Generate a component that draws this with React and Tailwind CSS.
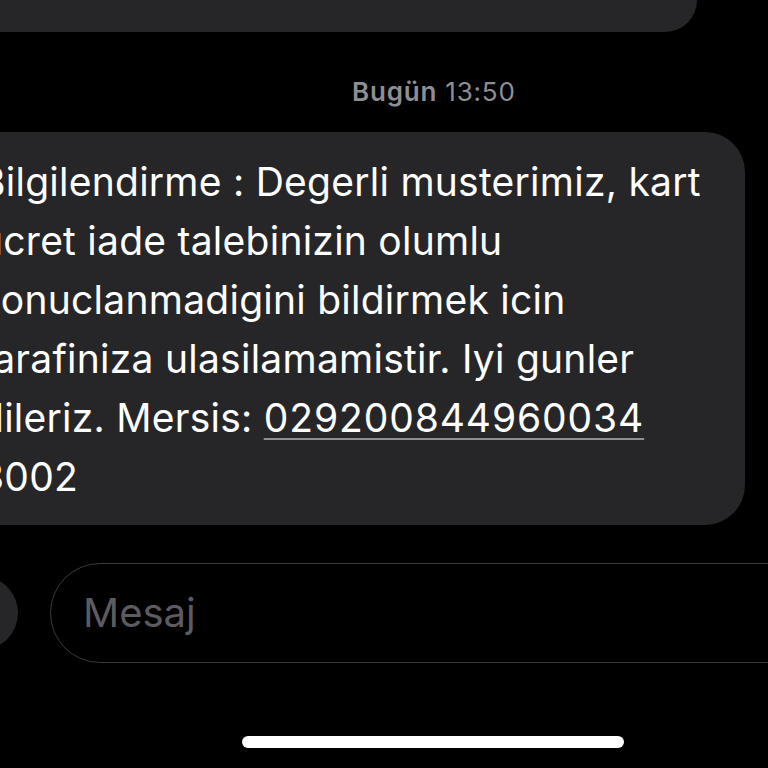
export default function App() {
  const font = { fontFamily: 'Inter, "Noto Sans", sans-serif' };
  return (
    <div
      className="w-[768px] h-[768px] bg-black overflow-hidden flex flex-col"
      style={font}
    >
      {/* previous bubble bottom */}
      <div className="h-[32px] w-[757px] -ml-[60px] shrink-0 rounded-b-[36px] bg-[#262629]" />

      {/* timestamp */}
      <div className="h-[100px] shrink-0 pt-[45px] pl-[352px] text-[26px] tracking-[0.8px] leading-[30px] text-[#8e8e93] whitespace-nowrap">
        <span className="font-semibold">Bugün</span> <span>13:50</span>
      </div>

      {/* main bubble */}
      <div className="w-[805px] -ml-[60px] shrink-0 rounded-[40px] bg-[#262629] pt-[20px] pb-[19px] pl-[40px] text-white text-[39px] tracking-[0.25px] leading-[59px] whitespace-nowrap">
        <div>Bilgilendirme : Degerli musterimiz, kart</div>
        <div>ucret iade talebinizin olumlu</div>
        <div>sonuclanmadigini bildirmek icin</div>
        <div>tarafiniza ulasilamamistir. Iyi gunler</div>
        <div>
          dileriz. Mersis:{" "}
          <span className="tracking-[0.9px] underline decoration-[#8e8e93] decoration-2 underline-offset-[6px]">
            029200844960034
          </span>
        </div>
        <div>3002</div>
      </div>

      {/* input row */}
      <div className="flex items-center shrink-0 mt-[38px] -ml-[56px] gap-[32px]">
        <div className="w-[74px] h-[74px] shrink-0 rounded-full bg-[#262628]" />
        <div className="h-[100px] w-[780px] shrink-0 rounded-full border-[1.5px] border-[#3a3a3c] flex items-center pl-[32px]">
          <span className="text-[40px] text-[#5c5c60] leading-none">Mesaj</span>
        </div>
      </div>

      {/* home indicator */}
      <div className="mt-[73px] ml-[242px] w-[382px] h-[12px] shrink-0 rounded-full bg-white" />
    </div>
  );
}
